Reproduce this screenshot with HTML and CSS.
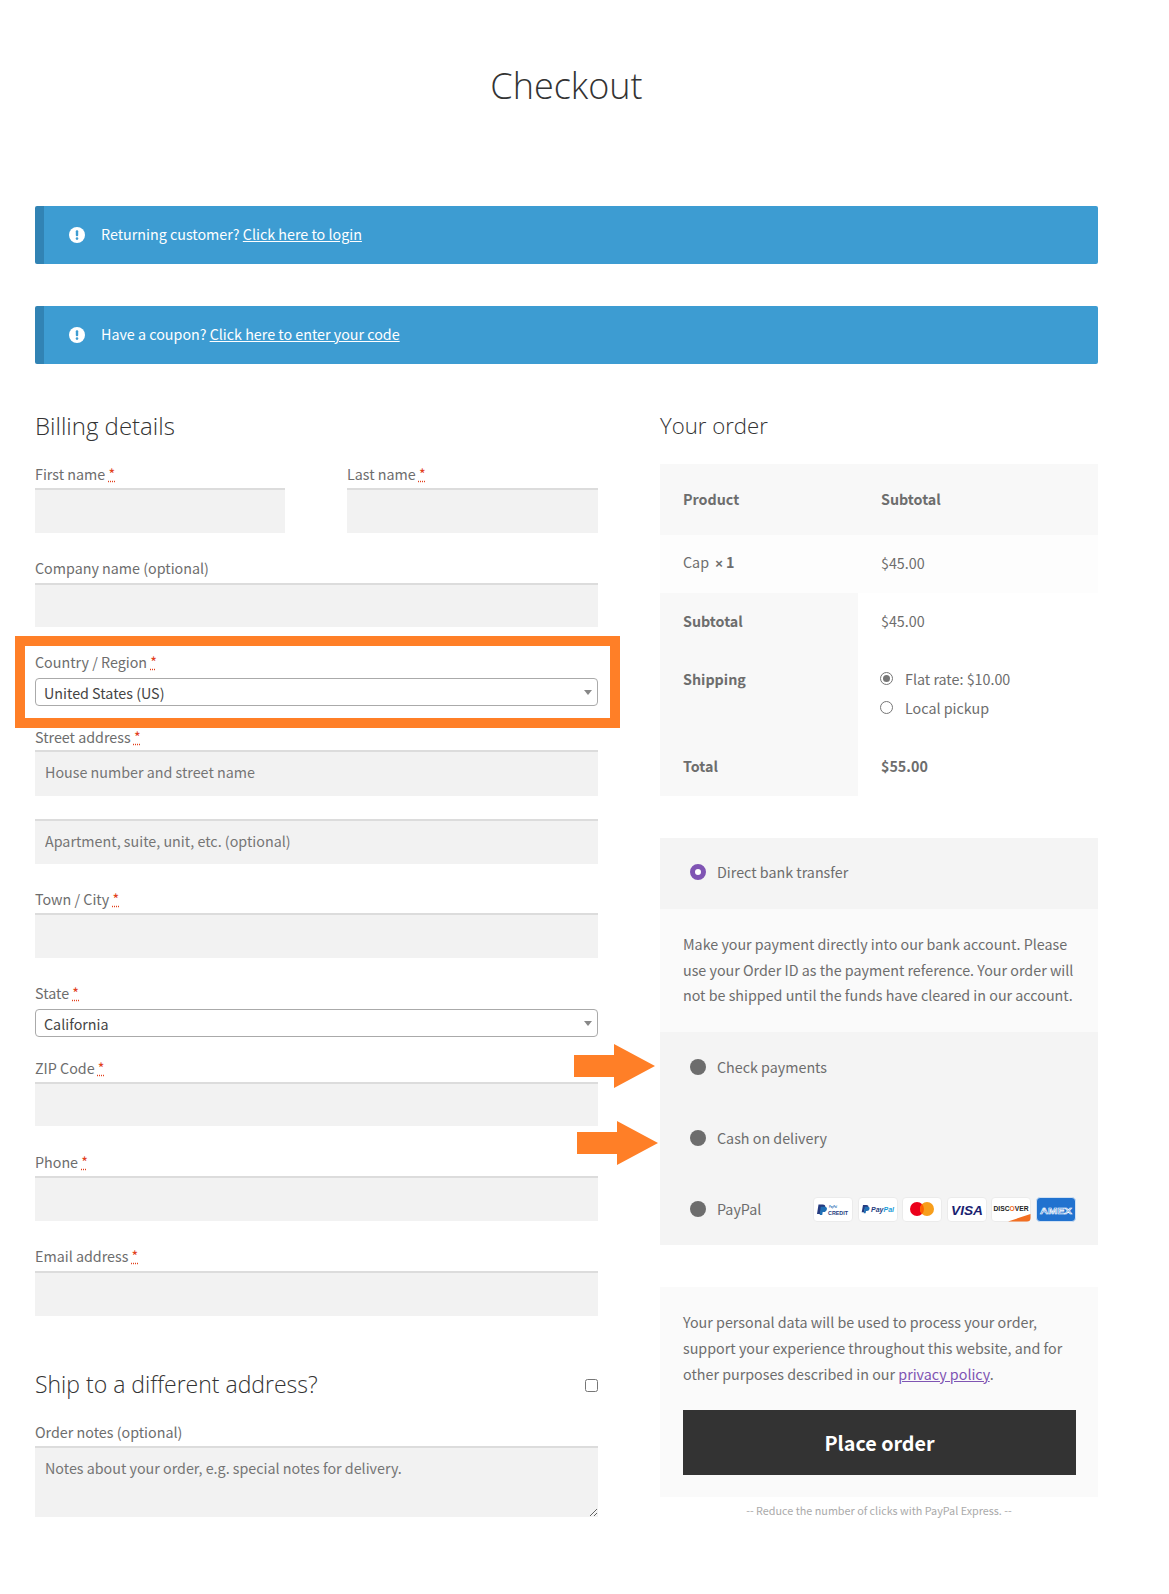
FILE: index.html
```html
<!DOCTYPE html>
<html lang="en">
<head>
<meta charset="utf-8">
<title>Checkout</title>
<link rel="stylesheet" href="styles.css">
</head>
<body>
<main class="page">
  <h1 class="title">Checkout</h1>

  <div class="notice">
    <svg class="notice-icon" viewBox="0 0 16 16"><circle cx="8" cy="8" r="8" fill="#fff"/><rect x="6.800" y="3.200" width="2.400" height="6" rx="1" fill="#3d9cd2"/><circle cx="8" cy="11.600" r="1.300" fill="#3d9cd2"/></svg>
    <span>Returning customer? <a href="#">Click here to login</a></span>
  </div>
  <div class="notice notice-second">
    <svg class="notice-icon" viewBox="0 0 16 16"><circle cx="8" cy="8" r="8" fill="#fff"/><rect x="6.800" y="3.200" width="2.400" height="6" rx="1" fill="#3d9cd2"/><circle cx="8" cy="11.600" r="1.300" fill="#3d9cd2"/></svg>
    <span>Have a coupon? <a href="#">Click here to enter your code</a></span>
  </div>

  <div class="columns">
    <form class="billing">
      <h2 class="section-title billing-title">Billing details</h2>
      <div class="name-row">
        <div class="field">
          <label>First name <abbr class="req" title="required">*</abbr></label>
          <input class="text">
        </div>
        <div class="field">
          <label>Last name <abbr class="req" title="required">*</abbr></label>
          <input class="text">
        </div>
      </div>
      <div class="field company">
        <label>Company name (optional)</label>
        <input class="text">
      </div>
      <div class="field country">
        <div class="highlight"></div>
        <label>Country / Region <abbr class="req" title="required">*</abbr></label>
        <div class="select-wrap"><select class="select"><option>United States (US)</option></select></div>
      </div>
      <div class="field street">
        <label>Street address <abbr class="req" title="required">*</abbr></label>
        <input class="text" placeholder="House number and street name">
      </div>
      <div class="field apartment">
        <input class="text" placeholder="Apartment, suite, unit, etc. (optional)">
      </div>
      <div class="field town">
        <label>Town / City <abbr class="req" title="required">*</abbr></label>
        <input class="text">
      </div>
      <div class="field state">
        <label>State <abbr class="req" title="required">*</abbr></label>
        <div class="select-wrap"><select class="select"><option>California</option></select></div>
      </div>
      <div class="field zip">
        <label>ZIP Code <abbr class="req" title="required">*</abbr></label>
        <input class="text">
      </div>
      <div class="field phone">
        <label>Phone <abbr class="req" title="required">*</abbr></label>
        <input class="text">
      </div>
      <div class="field email">
        <label>Email address <abbr class="req" title="required">*</abbr></label>
        <input class="text">
      </div>
      <div class="ship-row">
        <h3 class="section-title ship-title">Ship to a different address?</h3>
        <input class="check" type="checkbox">
      </div>
      <div class="field notes">
        <label>Order notes (optional)</label>
        <textarea class="area" placeholder="Notes about your order, e.g. special notes for delivery."></textarea>
      </div>
    </form>

    <aside class="order">
      <h2 class="section-title">Your order</h2>
      <table class="order-table">
        <thead>
          <tr class="head-row"><th class="col-a">Product</th><th>Subtotal</th></tr>
        </thead>
        <tbody>
          <tr class="item-row"><td class="col-a">Cap <strong class="qty"><span class="times">×</span>&nbsp;1</strong></td><td>$45.00</td></tr>
        </tbody>
        <tfoot>
          <tr class="sub-row"><th class="col-a side">Subtotal</th><td>$45.00</td></tr>
          <tr class="ship-table-row">
            <th class="col-a side">Shipping</th>
            <td>
              <div class="ship-option"><span class="radio radio-on"></span>Flat rate: $10.00</div>
              <div class="ship-option"><span class="radio"></span>Local pickup</div>
            </td>
          </tr>
          <tr class="total-row"><th class="col-a side">Total</th><td><strong>$55.00</strong></td></tr>
        </tfoot>
      </table>

      <div class="payment">
        <div class="pay-row pay-first"><span class="dot dot-active"></span>Direct bank transfer</div>
        <div class="pay-desc">Make your payment directly into our bank account. Please use your Order ID as the payment reference. Your order will not be shipped until the funds have cleared in our account.</div>
        <div class="pay-rest">
          <div class="pay-row pay-check">
            <svg class="arrow arrow-one" viewBox="0 0 81 44"><path d="M0 11H40V0L81 22L40 44V33H0Z" fill="#ff7f27"/></svg>
            <span class="dot"></span>Check payments
          </div>
          <div class="pay-row pay-cash">
            <svg class="arrow arrow-two" viewBox="0 0 81 44"><path d="M0 11H40V0L81 22L40 44V33H0Z" fill="#ff7f27"/></svg>
            <span class="dot"></span>Cash on delivery
          </div>
          <div class="pay-row pay-paypal">
            <span class="dot"></span>PayPal
            <div class="cards">
              <svg class="card" viewBox="0 0 40 25"><rect x=".5" y=".5" width="39" height="24" rx="3.500" fill="#fff" stroke="#ebebeb"/><path d="M5.500 7.500h4.200c2 0 3 1 2.600 2.900-.4 2-1.700 2.900-3.600 2.900H8l-.6 3.700H4z" fill="#253b80"/><path d="M7.800 9.800h3.800c1.800 0 2.600.9 2.300 2.500-.4 1.900-1.600 2.800-3.300 2.800H9.700l-.5 3H6.700z" fill="#1f6fb5"/><text x="16" y="10.500" class="t-mini" textLength="8" lengthAdjust="spacingAndGlyphs">PayPal</text><text x="15" y="17.500" class="t-credit" textLength="20" lengthAdjust="spacingAndGlyphs">CREDIT</text></svg>
              <svg class="card" viewBox="0 0 40 25"><rect x=".5" y=".5" width="39" height="24" rx="3.500" fill="#fff" stroke="#ebebeb"/><path d="M5 8h3.400c1.500 0 2.300.8 2 2.200-.3 1.500-1.300 2.200-2.800 2.200H6.400L6 15.200H3.700z" fill="#253b80"/><path d="M6.700 9.700h3c1.400 0 2.100.7 1.800 2-.3 1.500-1.200 2.200-2.600 2.200H8l-.4 2.400H5.700z" fill="#1f6fb5"/><text x="13" y="15" class="t-paypal" textLength="23" lengthAdjust="spacingAndGlyphs">Pay<tspan fill="#179bd7">Pal</tspan></text></svg>
              <svg class="card" viewBox="0 0 40 25"><rect x=".5" y=".5" width="39" height="24" rx="3.500" fill="#fff" stroke="#ebebeb"/><circle cx="15" cy="12" r="7" fill="#eb001b"/><circle cx="25" cy="12" r="7" fill="#f79e1b"/><path d="M20 7.100a7 7 0 0 1 0 9.800a7 7 0 0 1 0-9.800z" fill="#ff5f00"/></svg>
              <svg class="card" viewBox="0 0 40 25"><rect x=".5" y=".5" width="39" height="24" rx="3.500" fill="#fff" stroke="#ebebeb"/><text x="4" y="17.500" class="t-visa" textLength="32" lengthAdjust="spacingAndGlyphs">VISA</text></svg>
              <svg class="card" viewBox="0 0 40 25"><rect x=".5" y=".5" width="39" height="24" rx="3.500" fill="#fff" stroke="#ebebeb"/><path d="M17 24.500 39.500 17V21a3.500 3.500 0 0 1-3.500 3.500z" fill="#f26e21"/><text x="2.500" y="13.500" class="t-disc" textLength="35" lengthAdjust="spacingAndGlyphs">DISC<tspan fill="#f26e21">O</tspan>VER</text></svg>
              <svg class="card" viewBox="0 0 40 25"><rect x=".5" y=".5" width="39" height="24" rx="3.500" fill="#2172cf" stroke="#cfe0f3"/><text x="4" y="16.500" class="t-amex" textLength="32" lengthAdjust="spacingAndGlyphs">AMEX</text></svg>
            </div>
          </div>
        </div>
      </div>

      <div class="privacy">
        <p class="privacy-text">Your personal data will be used to process your order, support your experience throughout this website, and for other purposes described in our <a href="#">privacy policy</a>.</p>
        <button class="place" type="button">Place order</button>
      </div>
      <p class="express">-- Reduce the number of clicks with PayPal Express. --</p>
    </aside>
  </div>
</main>
</body>
</html>
```
FILE: styles.css
```css
* { box-sizing: border-box; }
html, body { margin: 0; padding: 0; background: #fff; }
body {
  font-family: "Noto Sans CJK SC", "Noto Sans CJK JP", "Noto Sans", sans-serif;
  font-size: 14.300px;
  line-height: 20px;
  color: #6d6d6d;
  min-height: 1594px;
}
.page { width: 1063px; margin-left: 35px; padding-top: 59px; }
.title {
  margin: 0 0 94px;
  text-align: center;
  font-family: "Open Sans", sans-serif;
  font-weight: 300;
  font-size: 36px;
  line-height: 53px;
  color: #333;
}
.notice {
  height: 58px;
  background: #3d9cd2;
  border-left: 9px solid #3183b4;
  border-radius: 2px;
  display: flex;
  align-items: center;
  padding-left: 25px;
  gap: 16px;
  color: #fff;
}
.notice span { line-height: 18px; padding-bottom: 2px; }
.notice a { color: #fff; text-decoration: underline; }
.notice-icon { width: 16px; height: 16px; flex: none; }
.notice-second { margin-top: 42px; }
.columns {
  display: grid;
  grid-template-columns: 563px 438px;
  column-gap: 62px;
  margin-top: 47px;
}
.section-title {
  margin: 0;
  font-family: "Open Sans", sans-serif;
  font-weight: 300;
  font-size: 22.200px;
  line-height: 30px;
  padding-bottom: 2px;
  color: #333;
}
.billing-title { font-size: 24px; }
.ship-title { font-size: 23px; }
.field { display: block; position: relative; }
.field label { display: block; height: 20px; line-height: 18px; }
.req { color: #e2401c; font-weight: 400; text-decoration: underline dotted #e2401c; }
.name-row { display: grid; grid-template-columns: 250px 251px; column-gap: 62px; margin-top: 22px; }
.text {
  display: block;
  width: 100%;
  height: 45px;
  margin-top: 3px;
  border: 0;
  border-top: 2px solid #dcdcdc;
  background: #f2f2f2;
  padding: 0 10px 5px;
  font: inherit;
  color: #333;
  outline: 0;
}
.text::placeholder, .area::placeholder { color: #757575; opacity: 1; }
.company { margin-top: 26px; }
.company .text { margin-top: 4px; height: 44px; }
.country { margin-top: 26px; }
.highlight {
  position: absolute;
  left: -20px;
  right: -22px;
  top: -17px;
  height: 92px;
  border: 10px solid #ff7f27;
  pointer-events: none;
}
.select-wrap { position: relative; margin-top: 5px; height: 28px; }
.select-wrap::after {
  content: "";
  position: absolute;
  right: 6px;
  top: 12px;
  border-left: 4px solid transparent;
  border-right: 4px solid transparent;
  border-top: 5px solid #888;
}
.select {
  display: block;
  width: 100%;
  height: 28px;
  appearance: none;
  -webkit-appearance: none;
  border: 1px solid #aaa;
  border-radius: 4px;
  background: #fff;
  padding: 2px 8px 0;
  font: inherit;
  color: #444;
}
.street { margin-top: 22px; }
.street .text { margin-top: 2px; height: 46px; }
.apartment { margin-top: 23px; }
.apartment .text { margin-top: 0; }
.town { margin-top: 26px; }
.state { margin-top: 26px; }
.zip { margin-top: 22px; }
.zip .text { margin-top: 3px; height: 44px; }
.phone { margin-top: 27px; }
.phone .text { margin-top: 3px; }
.email { margin-top: 26px; }
.email .text { margin-top: 4px; }
.ship-row { display: flex; justify-content: space-between; align-items: center; margin-top: 53px; }
.check {
  appearance: none;
  -webkit-appearance: none;
  width: 13px;
  height: 13px;
  margin: 0;
  border: 1px solid #767676;
  border-radius: 2.500px;
  background: #fff;
}
.notes { margin-top: 22px; }
.area {
  display: block;
  width: 100%;
  height: 71px;
  margin-top: 3px;
  border: 0;
  border-top: 2px solid #dcdcdc;
  background: #f2f2f2;
  padding: 10px 10px 6px;
  font: inherit;
  color: #333;
  outline: 0;
}
.order-table {
  width: 100%;
  margin-top: 21px;
  border-collapse: collapse;
  table-layout: fixed;
}
.order-table th, .order-table td { padding: 0 23px 2px; text-align: left; vertical-align: middle; }
.order-table th { font-weight: 600; }
.col-a { width: 198px; }
.head-row { height: 71px; background: #f8f8f8; }
.item-row { height: 58px; background: #fdfdfd; }
.sub-row { height: 58px; }
.side { background: #f8f8f8; }
.order-table .ship-table-row th { vertical-align: top; padding-top: 18px; }
.order-table .ship-table-row td { vertical-align: top; padding-top: 13px; }
.ship-table-row { height: 87px; }
.total-row { height: 58px; }
.total-row strong { font-weight: 600; }
.qty { font-weight: 600; margin-left: 3px; }
.times { font-family: "Liberation Sans", sans-serif; font-size: 13px; }
.ship-option { display: flex; align-items: center; height: 29px; }
.radio {
  width: 13px;
  height: 13px;
  border: 1px solid #767676;
  border-radius: 50%;
  background: #fff;
  margin-right: 12px;
  margin-left: -1px;
  flex: none;
  position: relative;
}
.radio-on::after {
  content: "";
  position: absolute;
  inset: 2px;
  border-radius: 50%;
  background: #767676;
}
.payment { margin-top: 42px; background: #fafafa; }
.pay-row { display: flex; align-items: center; position: relative; padding-left: 29.500px; padding-bottom: 2px; }
.dot {
  width: 16px;
  height: 16px;
  border-radius: 50%;
  background: #6d6d6d;
  margin-right: 11.500px;
  flex: none;
}
.dot-active { background: #fff; border: 5px solid #7f54b3; }
.pay-first { height: 71px; background: #f4f4f4; padding-bottom: 4px; }
.pay-desc { height: 123px; padding: 22px 15px 0 23px; line-height: 25.500px; }
.pay-rest { background: #f4f4f4; height: 213px; }
.pay-check { height: 71px; }
.pay-cash { height: 71px; }
.pay-paypal { height: 71px; }
.arrow { position: absolute; width: 81px; height: 44px; }
.arrow-one { left: -86px; top: 12px; }
.arrow-two { left: -83px; top: 18px; }
.cards { display: flex; gap: 4.600px; margin-left: auto; margin-right: 22px; margin-top: 2px; }
.card { width: 40px; height: 25px; display: block; }
.card text { font-family: "Liberation Sans", sans-serif; font-weight: 700; }
.t-mini { font-size: 3.500px; fill: #1f6fb5; font-style: italic; }
.t-credit { font-size: 6px; fill: #253b80; }
.t-paypal { font-size: 7px; fill: #253b80; font-style: italic; }
.t-visa { font-size: 13px; fill: #1a1f71; font-style: italic; }
.t-disc { font-size: 6.500px; fill: #222; }
.t-amex { font-size: 9px; fill: #2172cf; stroke: #fff; stroke-width: .6px; }
.privacy { margin-top: 42px; background: #fafafa; height: 210px; padding: 22px 23px 0; }
.privacy-text { margin: 0; line-height: 26px; }
.privacy-text a { color: #7f54b3; text-decoration: underline; }
.place {
  display: block;
  width: 393px;
  height: 65px;
  margin-top: 23px;
  border: 0;
  background: #333;
  color: #fff;
  font: inherit;
  font-weight: 600;
  font-size: 19.700px;
}
.express { margin: 4px 0 0; text-align: center; font-size: 10.800px; line-height: 18px; color: #aaa; }
```
